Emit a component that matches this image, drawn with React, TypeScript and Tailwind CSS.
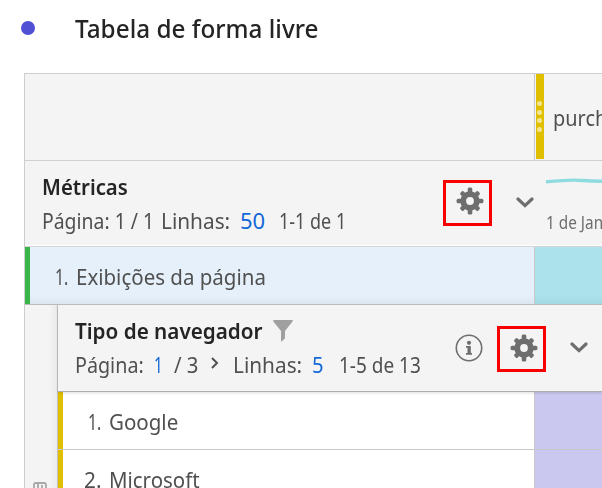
import { useLayoutEffect, useRef, useState } from 'react';
import type { ReactNode } from 'react';
import clsx from 'clsx';

function Fit({ className, children }: { className: string; children: ReactNode }) {
  const box = useRef<HTMLSpanElement>(null);
  const text = useRef<HTMLSpanElement>(null);
  const [scale, setScale] = useState(1);
  useLayoutEffect(() => {
    if (box.current && text.current) {
      setScale(box.current.offsetWidth / text.current.offsetWidth);
    }
  }, []);
  return (
    <span ref={box} className={clsx('block shrink-0 whitespace-pre', className)}>
      <span ref={text} className="inline-block origin-left" style={{ transform: `scaleX(${scale})` }}>
        {children}
      </span>
    </span>
  );
}

function Gear() {
  return (
    <svg viewBox="-14 -14 28 28" className="size-7" fill="#6e6e6e">
      <mask id="hub" maskUnits="userSpaceOnUse" x="-14" y="-14" width="28" height="28">
        <rect x="-14" y="-14" width="28" height="28" fill="white" />
        <circle r="3.9" fill="black" />
      </mask>
      <g mask="url(#hub)">
        <circle r="9.7" />
        {[0, 45, 90, 135].map((a) => (
          <rect
            key={a}
            x="-2.3"
            y={a % 90 ? -12.6 : -13.4}
            width="4.6"
            height={a % 90 ? 25.2 : 26.8}
            rx="1.5"
            transform={`rotate(${a})`}
          />
        ))}
      </g>
    </svg>
  );
}

function GearBox() {
  return (
    <span className="flex h-[46px] w-[49px] shrink-0 items-center justify-center border-[3px] border-[#f80000] pb-[3px] pl-1">
      <Gear />
    </span>
  );
}

function Chevron() {
  return (
    <svg viewBox="0 0 18 12" className="h-3 w-[18px] shrink-0" fill="none" stroke="#6e6e6e" strokeWidth="3.2" strokeLinecap="round" strokeLinejoin="miter">
      <path d="M2 2 9 8.6 16 2" />
    </svg>
  );
}

function Item({ n, nClass, name, nameClass }: { n: string; nClass: string; name: string; nameClass: string }) {
  return (
    <div className="flex h-[58px] shrink-0 border-b border-[#c8c8c8]">
      <div className="w-[5px] shrink-0 bg-[#dfbf00]" />
      <div className="flex w-[472px] shrink-0 border-r border-[#c8c8c8] bg-white pt-[15px]">
        <Fit className={nClass}>{n}</Fit>
        <Fit className={nameClass}>{name}</Fit>
      </div>
      <div className="grow bg-[#cac8ee]" />
    </div>
  );
}

export default function App() {
  return (
    <div className="flex h-[488px] w-[602px] flex-col overflow-hidden bg-white font-['Noto_Sans','Open_Sans',sans-serif] text-[22px] leading-[28px] text-[#505050]">
      <header className="flex h-[73px] shrink-0 items-start pl-[21px] pt-[13px]">
        <span className="mt-[8px] size-[14px] shrink-0 rounded-full bg-[#5050d5]" />
        <h1 className="pl-[40px] text-[25px] font-medium leading-[30px] text-[#242424]">
          <Fit className="w-[243px]">Tabela de forma livre</Fit>
        </h1>
      </header>

      <main className="ml-6 flex h-[415px] w-[578px] flex-col border-l border-t border-[#cecece] bg-[#f4f4f4]">
        <div className="flex h-[87px] shrink-0 border-b border-[#d0d0d0]">
          <div className="w-[510px] shrink-0 border-r border-[#c8c8c8]" />
          <div className="ml-px flex h-[85px] w-2 shrink-0 flex-col items-center gap-[3.5px] bg-[#dfbf00] pr-px pt-[27px]">
            <i className="size-[5px] rounded-full bg-[#f3e58f]" />
            <i className="size-[5px] rounded-full bg-[#f3e58f]" />
            <i className="size-[5px] rounded-full bg-[#f3e58f]" />
            <i className="size-[5px] rounded-full bg-[#f3e58f]" />
          </div>
          <div className="pl-[9px] pt-[29px]">
            <Fit className="w-[86px]">purchase</Fit>
          </div>
        </div>

        <div className="flex h-[86px] shrink-0 border-b border-[#d4d4d4] shadow-[inset_0_-1px_white]">
          <div className="w-[401px] shrink-0 pl-[17px] pt-[11px]">
            <div className="font-semibold text-[#242424]">
              <Fit className="w-[86px]">Métricas</Fit>
            </div>
            <div className="mt-[6px] flex">
              <Fit className="w-[112px]">Página: 1 / 1</Fit>
              <Fit className="ml-[7px] w-[69px]">Linhas:</Fit>
              <Fit className="ml-[10px] w-[25px] text-[#1268d8]">50</Fit>
              <Fit className="ml-[14px] w-[67px]">1-1 de 1</Fit>
            </div>
          </div>
          <div className="flex h-[83px] items-center pl-[17px]">
            <GearBox />
            <span className="pl-[24px]"><Chevron /></span>
          </div>
          <div className="w-[69px] pl-[12px] pt-[16px]">
            <svg viewBox="0 0 57 8" className="h-2 w-[57px]" fill="none" stroke="#8edcdf" strokeWidth="3.4">
              <path d="M0 4.7C10 4.3 20 3 28 3.1S40 4.3 57 4.2" />
            </svg>
            <div className="pt-[23px] text-[17.5px] leading-[28px] text-[#6e6e6e]">
              <Fit className="w-[57px]">1 de Jan</Fit>
            </div>
          </div>
        </div>

        <div className="flex h-[58px] shrink-0 border-b border-[#b8babb]">
          <div className="w-[5px] shrink-0 bg-[#3ab54a]" />
          <div className="flex w-[505px] shrink-0 border-r border-[#c8c8c8] bg-linear-to-b from-[#e5f0fb] from-85% to-[#dbe6f0] pt-[15px]">
            <Fit className="ml-[25px] w-[13px]">1.</Fit>
            <Fit className="ml-[8px] w-[190px]">Exibições da página</Fit>
          </div>
          <div className="grow bg-linear-to-b from-[#abe2eb] from-85% to-[#a1d9e2]" />
        </div>

        <div className="flex h-[183px] shrink-0 overflow-hidden">
          <aside className="flex w-8 shrink-0 items-end bg-linear-to-r from-[#f4f4f4] from-75% to-[#ebebeb]">
            <svg viewBox="0 0 14 6" className="ml-[8px] h-[6px] w-[14px]" fill="none" stroke="#a8a8a8" strokeWidth="1.8">
              <path d="M1 6V3q0-2 2-2h8q2 0 2 2v3M5 1v5M9 3v3" />
            </svg>
          </aside>
          <section className="flex w-[545px] shrink-0 flex-col border-l border-[#c0c0c0]">
            <div className="z-10 flex h-[87px] shrink-0 border-b border-[#adadad] bg-[#f4f4f4] shadow-[0_1px_3px_#00000022]">
              <div className="w-[398px] shrink-0 pl-[17px] pt-[11px]">
                <div className="flex font-semibold text-[#242424]">
                  <Fit className="w-[188px]">Tipo de navegador</Fit>
                  <svg viewBox="0 0 20 22" className="ml-[10px] mt-[4px] h-[22px] w-5" fill="#a0a0a0">
                    <path d="M.5 0h19q.7.7 0 1.5L12 11v7.2l-3 3q-1 .6-1-.5V11L.3 1.5Q0 .7.5 0z" />
                  </svg>
                </div>
                <div className="mt-[6px] flex">
                  <Fit className="w-[69px]">Página:</Fit>
                  <Fit className="ml-[10px] w-[9px] text-[#1268d8]">1</Fit>
                  <Fit className="ml-[11px] w-[25px]">/ 3</Fit>
                  <svg viewBox="0 0 8 12" className="ml-[12px] mt-[7px] h-3 w-2" fill="none" stroke="#505050" strokeWidth="2">
                    <path d="M1 1l5 5-5 5" />
                  </svg>
                  <Fit className="ml-[14px] w-[69px]">Linhas:</Fit>
                  <Fit className="ml-[10px] w-[12px] text-[#1268d8]">5</Fit>
                  <Fit className="ml-[15px] w-[82px]">1-5 de 13</Fit>
                </div>
              </div>
              <div className="flex h-[86px] items-center">
                <svg viewBox="0 0 28 28" className="-ml-[1px] size-7" fill="#6e6e6e">
                  <circle cx="14" cy="14" r="12.7" fill="none" stroke="#6e6e6e" strokeWidth="1.6" />
                  <circle cx="14" cy="8.8" r="2.1" />
                  <path d="M11 12h4.8v7H17v1.7h-6V19h1.5v-5.3H11z" />
                </svg>
                <span className="flex pl-[14px] pt-[2px]"><GearBox /></span>
                <span className="pl-[24px]"><Chevron /></span>
              </div>
            </div>
            <Item n="1." nClass="ml-[25px] w-[13px]" name="Google" nameClass="ml-[8px] w-[69px]" />
            <Item n="2." nClass="ml-[21px] w-[17px]" name="Microsoft" nameClass="ml-[8px] w-[91px]" />
          </section>
        </div>
      </main>
    </div>
  );
}
